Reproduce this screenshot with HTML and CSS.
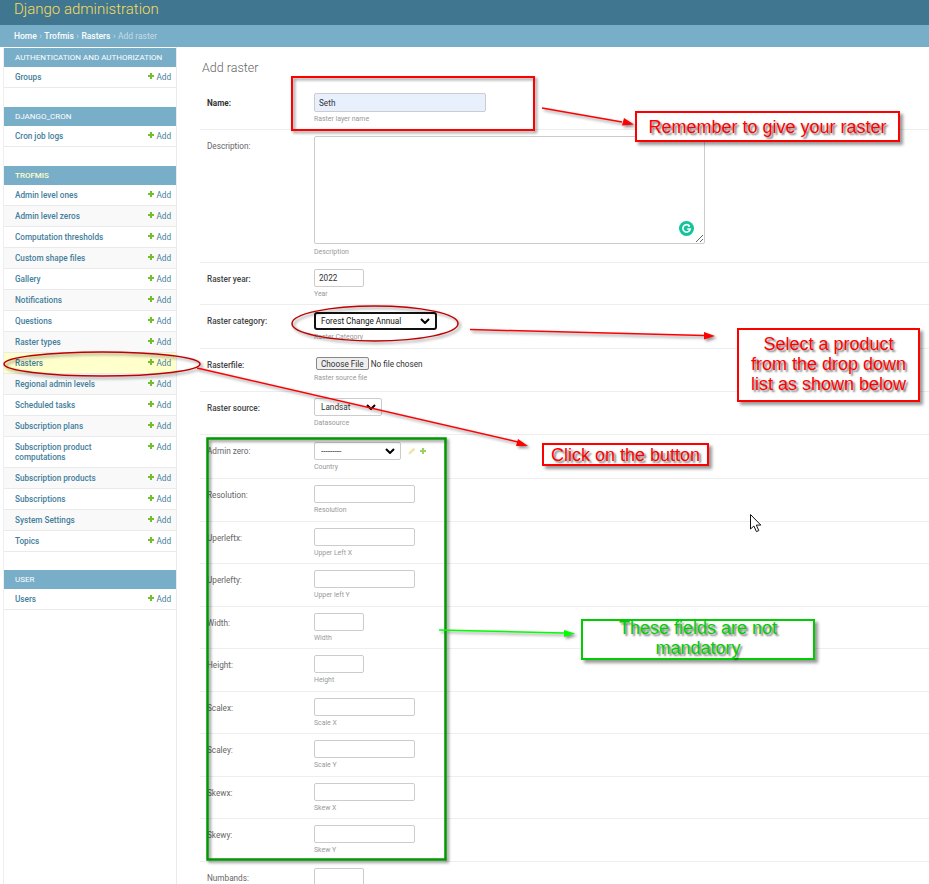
FILE: index.html
```html
<!DOCTYPE html>
<html lang="en">
<head>
  <meta charset="UTF-8" />
  <title>Add raster | Django site admin</title>
  <link rel="stylesheet" href="styles.css">
</head>
<body>
<div class="page">
  <div class="header"><span class="brand">Django administration</span></div>
  <div class="breadcrumbs">
    <a>Home</a><i>›</i><a>Trofmis</a><i>›</i><a>Rasters</a><i>›</i><span>Add raster</span>
  </div>

  <div class="main">
    <div class="sidebar">
      <div class="module">
        <div class="caption">Authentication and Authorization</div>
        <div class="model"><a>Groups</a><span class="add">Add</span></div>
      </div>
      <div class="module">
        <div class="caption">Django_Cron</div>
        <div class="model"><a>Cron job logs</a><span class="add">Add</span></div>
      </div>
      <div class="module module-last">
        <div class="caption current-app">Trofmis</div>
        <div class="model"><a>Admin level ones</a><span class="add">Add</span></div>
        <div class="model alt"><a>Admin level zeros</a><span class="add">Add</span></div>
        <div class="model"><a>Computation thresholds</a><span class="add">Add</span></div>
        <div class="model alt"><a>Custom shape files</a><span class="add">Add</span></div>
        <div class="model"><a>Gallery</a><span class="add">Add</span></div>
        <div class="model alt"><a>Notifications</a><span class="add">Add</span></div>
        <div class="model"><a>Questions</a><span class="add">Add</span></div>
        <div class="model alt"><a>Raster types</a><span class="add">Add</span></div>
        <div class="model current"><a>Rasters</a><span class="add">Add</span></div>
        <div class="model alt"><a>Regional admin levels</a><span class="add">Add</span></div>
        <div class="model"><a>Scheduled tasks</a><span class="add">Add</span></div>
        <div class="model alt"><a>Subscription plans</a><span class="add">Add</span></div>
        <div class="model"><a>Subscription product<br>computations</a><span class="add">Add</span></div>
        <div class="model alt"><a>Subscription products</a><span class="add">Add</span></div>
        <div class="model"><a>Subscriptions</a><span class="add">Add</span></div>
        <div class="model alt"><a>System Settings</a><span class="add">Add</span></div>
        <div class="model"><a>Topics</a><span class="add">Add</span></div>
      </div>
      <div class="module">
        <div class="caption">User</div>
        <div class="model"><a>Users</a><span class="add">Add</span></div>
      </div>
    </div>

    <div class="content">
      <h1>Add raster</h1>

      <div class="form-row row-name">
        <label class="required">Name:</label>
        <div class="field">
          <input class="wide filled" type="text" value="Seth">
          <div class="help">Raster layer name</div>
        </div>
      </div>
      <div class="form-row row-desc">
        <label>Description:</label>
        <div class="field">
          <div class="area-wrap">
            <textarea class="area"></textarea>
            <span class="grammarly">
              <svg width="15" height="15" viewBox="0 0 15 15"><circle cx="7.5" cy="7.5" r="7.5" fill="#15c39a"/><path d="M10.6 5.2A3.7 3.7 0 1 0 11.2 8H8.2" fill="none" stroke="#fff" stroke-width="1.6"/><path d="M9.6 3.6l1.6 2-2.3.3z" fill="#fff"/></svg>
            </span>
          </div>
          <div class="help">Description</div>
        </div>
      </div>
      <div class="form-row row-42">
        <label class="medium">Raster year:</label>
        <div class="field">
          <input class="short" type="text" value="2022">
          <div class="help">Year</div>
        </div>
      </div>
      <div class="form-row row-44">
        <label class="medium">Raster category:</label>
        <div class="field">
          <select class="sel sel-focus"><option>Forest Change Annual</option></select>
          <div class="help">Raster Category</div>
        </div>
      </div>
      <div class="form-row row-43">
        <label class="medium">Rasterfile:</label>
        <div class="field">
          <input class="file" type="file">
          <div class="help">Raster source file</div>
        </div>
      </div>
      <div class="form-row row-43">
        <label class="medium">Raster source:</label>
        <div class="field">
          <select class="sel sel-source"><option>Landsat</option></select>
          <div class="help">Datasource</div>
        </div>
      </div>
      <div class="form-row row-44">
        <label>Admin zero:</label>
        <div class="field">
          <div class="related">
            <select class="sel sel-admin"><option>---------</option></select>
            <svg class="rel-icon" width="8" height="8" viewBox="0 0 8 8"><path d="M0.5 7.5l.5-2.2L5.6.7l1.7 1.7-4.6 4.6z" fill="#f3e3a8"/></svg>
            <span class="rel-add"></span>
          </div>
          <div class="help">Country</div>
        </div>
      </div>
      <div class="form-row">
        <label>Resolution:</label>
        <div class="field"><input class="mid" type="text"><div class="help">Resolution</div></div>
      </div>
      <div class="form-row">
        <label>Uperleftx:</label>
        <div class="field"><input class="mid" type="text"><div class="help">Upper Left X</div></div>
      </div>
      <div class="form-row">
        <label>Uperlefty:</label>
        <div class="field"><input class="mid" type="text"><div class="help">Upper left Y</div></div>
      </div>
      <div class="form-row">
        <label>Width:</label>
        <div class="field"><input class="short" type="text"><div class="help">Width</div></div>
      </div>
      <div class="form-row">
        <label>Height:</label>
        <div class="field"><input class="short" type="text"><div class="help">Height</div></div>
      </div>
      <div class="form-row">
        <label>Scalex:</label>
        <div class="field"><input class="mid" type="text"><div class="help">Scale X</div></div>
      </div>
      <div class="form-row">
        <label>Scaley:</label>
        <div class="field"><input class="mid" type="text"><div class="help">Scale Y</div></div>
      </div>
      <div class="form-row">
        <label>Skewx:</label>
        <div class="field"><input class="mid" type="text"><div class="help">Skew X</div></div>
      </div>
      <div class="form-row">
        <label>Skewy:</label>
        <div class="field"><input class="mid" type="text"><div class="help">Skew Y</div></div>
      </div>
      <div class="form-row">
        <label>Numbands:</label>
        <div class="field"><input class="short" type="text"></div>
      </div>
    </div>
  </div>

  <!-- annotations drawn on top of the screenshot -->
  <svg class="marks" width="929" height="884" viewBox="0 0 929 884">
    <g class="shadow">
      <rect x="292" y="77" width="242" height="53" fill="none" stroke="#f00" stroke-width="2"/>
      <rect x="207.500" y="438.500" width="238" height="421" fill="none" stroke="#090" stroke-width="2.500"/>
      <ellipse cx="102" cy="364" rx="98" ry="12" fill="none" stroke="#c00000" stroke-width="1.500"/>
      <ellipse cx="375" cy="323.500" rx="83" ry="17.500" fill="none" stroke="#c00000" stroke-width="1.500"/>
      <path d="M542 108L622 122" stroke="#f00" stroke-width="1.500" fill="none"/>
      <path d="M634 124.500L622 125.500L624 118z" fill="#f00"/>
      <path d="M470 329.500L704 335.500" stroke="#f00" stroke-width="1.500" fill="none"/>
      <path d="M715 336L704 339.500L704 332z" fill="#f00"/>
      <path d="M197 368L518 442" stroke="#f00" stroke-width="1.500" fill="none"/>
      <path d="M528 446L516 446L518 439z" fill="#f00"/>
      <path d="M439 630L564 633" stroke="#0f0" stroke-width="1.500" fill="none"/>
      <path d="M575 633.500L564 637L564 630z" fill="#0f0"/>
    </g>
    <path d="M750.500 514.500V529l3.400-3 2.500 5.600 2.400-1-2.500-5.500h4.500z" fill="#fff" stroke="#111" stroke-width="1"/>
  </svg>
  <div class="note note-remember">Remember to give your raster</div>
  <div class="note note-select">Select a product from the drop down list as shown below</div>
  <div class="note note-click">Click on the button</div>
  <div class="note note-green"><span>These fields are not mandatory</span></div>
</div>
</body>
</html>
```

FILE: styles.css
```css
html, body {
  margin: 0;
  padding: 0;
  background-color: #fff;
}
.page {
  position: relative;
  width: 929px;
  height: 884px;
  overflow: hidden;
  font-family: Roboto, "Liberation Sans", sans-serif;
  color: #333;
}

/* top bars */
.header {
  height: 25px;
  background-color: #417690;
  padding-left: 14px;
  line-height: 18px;
  box-sizing: border-box;
}
.brand {
  color: #f5dd5d;
  font-size: 15px;
  font-weight: 300;
}
.breadcrumbs {
  height: 22px;
  line-height: 22px;
  background-color: #79aec8;
  padding-left: 14px;
  font-size: 8.500px;
  color: #c4dce8;
}
.breadcrumbs a {
  color: #fff;
  font-weight: 500;
}
.breadcrumbs i {
  display: inline-block;
  width: 7.500px;
  text-align: center;
  font-style: normal;
}

.main {
  display: flex;
}

/* left nav */
.sidebar {
  width: 172px;
  margin-left: 4px;
  padding-top: 1px;
  height: 837px;
  box-sizing: border-box;
  flex: none;
  box-shadow: 1px 0 0 #eaeaea, -1px 0 0 #eee;
}
.module {
  margin-bottom: 19px;
}
.module-last {
  margin-bottom: 18px;
}
.caption {
  height: 19px;
  line-height: 19px;
  background-color: #79aec8;
  color: #fff;
  font-size: 8px;
  font-weight: 400;
  text-transform: uppercase;
  padding-left: 11px;
}
.current-app {
  color: #ffc;
  font-weight: 500;
}
.model {
  display: flex;
  justify-content: space-between;
  padding: 5px 5px 5px 11px;
  border-bottom: 1px solid #eaeaea;
  font-size: 8.200px;
  line-height: 10px;
  color: #447e9b;
  font-weight: 500;
}
.alt {
  background-color: #f9f9f9;
}
.current {
  background-color: #ffc;
}
.add {
  position: relative;
  padding-left: 8.500px;
  font-weight: 400;
}
.add::before {
  content: "";
  position: absolute;
  left: 0;
  top: 1px;
  width: 6px;
  height: 6px;
  background:
    linear-gradient(#70bf2b, #70bf2b) center / 2px 6px no-repeat,
    linear-gradient(#70bf2b, #70bf2b) center / 6px 2px no-repeat;
}

/* form */
.content {
  flex: 1;
  margin-left: 24px;
}
h1 {
  margin: 0;
  height: 40px;
  padding: 13px 0 0 2px;
  box-sizing: border-box;
  font-size: 12.500px;
  line-height: 15px;
  font-weight: 300;
  color: #666;
}
.form-row {
  display: flex;
  height: 42.550px;
  box-sizing: border-box;
  padding-top: 6px;
  border-bottom: 1px solid #eee;
}
.row-name { height: 43px; }
.row-desc { height: 133px; }
.row-42 { height: 42px; }
.row-43 { height: 43px; }
.row-44 { height: 44px; }
label {
  width: 107px;
  margin-left: 7px;
  flex: none;
  font-size: 8.200px;
  line-height: 18px;
  color: #666;
  margin-top: 1px;
}
.required {
  font-weight: 700;
  color: #333;
}
.medium {
  color: #444;
  font-weight: 500;
}
input[type="text"], textarea, .sel {
  display: block;
  box-sizing: border-box;
  border: 1px solid #ccc;
  border-radius: 2px;
  background-color: #fff;
  font-family: Roboto, "Liberation Sans", sans-serif;
  font-size: 8.200px;
  color: #333;
  margin: 0;
  padding: 0 4px;
  outline: none;
  height: 18px;
}
.wide {
  width: 172px;
  height: 19px !important;
}
.filled {
  background-color: #e8f0fe !important;
}
.mid { width: 101px; }
.short { width: 50px; }
.area-wrap {
  position: relative;
  width: 391px;
  height: 108px;
}
.area {
  width: 391px;
  height: 108px !important;
}
.row-desc .help {
  margin-top: 3px;
}
.grammarly {
  position: absolute;
  right: 11px;
  bottom: 8px;
  width: 15px;
  height: 15px;
}
.sel {
  appearance: none;
  padding-left: 6px;
  background-image: url("data:image/svg+xml,%3Csvg xmlns='http://www.w3.org/2000/svg' width='10' height='6'%3E%3Cpath d='M1 1l4 4 4-4' fill='none' stroke='%23000' stroke-width='2'/%3E%3C/svg%3E");
  background-repeat: no-repeat;
  background-position: right 5px center;
}
.sel-focus {
  width: 123px;
  border: 2px solid #111;
  border-radius: 3px;
  margin-top: 1px;
  color: #111;
  padding-left: 5px;
}
.sel-source { width: 68px; }
.sel-admin { width: 87px; }
.related {
  display: flex;
  align-items: center;
  margin-top: 1px;
}
.rel-icon {
  margin-left: 7px;
}
.rel-add {
  width: 6px;
  height: 6px;
  margin-left: 4px;
  background:
    linear-gradient(#9bd067, #9bd067) center / 2px 6px no-repeat,
    linear-gradient(#9bd067, #9bd067) center / 6px 2px no-repeat;
}
.file {
  display: block;
  font-family: Roboto, "Liberation Sans", sans-serif;
  font-size: 8.200px;
  color: #333;
  height: 14px;
  margin: 2px 0 0;
  width: 120px;
}
.file::file-selector-button {
  font-family: Roboto, "Liberation Sans", sans-serif;
  font-size: 8.200px;
  height: 13px;
  padding: 0 4px;
  margin: 0 2px 0 2px;
  border: 1px solid #888;
  border-radius: 2px;
  background-color: #efefef;
  color: #333;
}
.help {
  font-size: 6.900px;
  line-height: 10px;
  margin-top: 2px;
  color: #999;
}

/* annotation layer */
.marks {
  position: absolute;
  left: 0;
  top: 0;
  pointer-events: none;
}
.shadow {
  filter: drop-shadow(2.500px 2.500px 1.500px rgba(0, 0, 0, 0.45));
}
.note {
  position: absolute;
  box-sizing: border-box;
  background-color: #fff;
  border: 2px solid #f00;
  box-shadow: 3px 3px 3px rgba(0, 0, 0, 0.4);
  color: #f00;
  text-shadow: 2px 2px 2px rgba(0, 0, 0, 0.55);
  font-family: "Liberation Sans", Arial, sans-serif;
  font-size: 18px;
  line-height: 20px;
  text-align: center;
}
.note-remember {
  left: 635px;
  top: 111px;
  width: 265px;
  height: 31px;
  padding-top: 4px;
}
.note-select {
  left: 737px;
  top: 328px;
  width: 183px;
  height: 74px;
  padding: 4px 10px 0;
}
.note-click {
  left: 542px;
  top: 443px;
  width: 167px;
  height: 23px;
  line-height: 21px;
}
.note-green {
  left: 581px;
  top: 619px;
  width: 234px;
  height: 41px;
  padding: 0 30px;
  border-color: #0c0;
  color: #0c0;
}
.note-green span {
  display: block;
  margin-top: -3px;
}
```
